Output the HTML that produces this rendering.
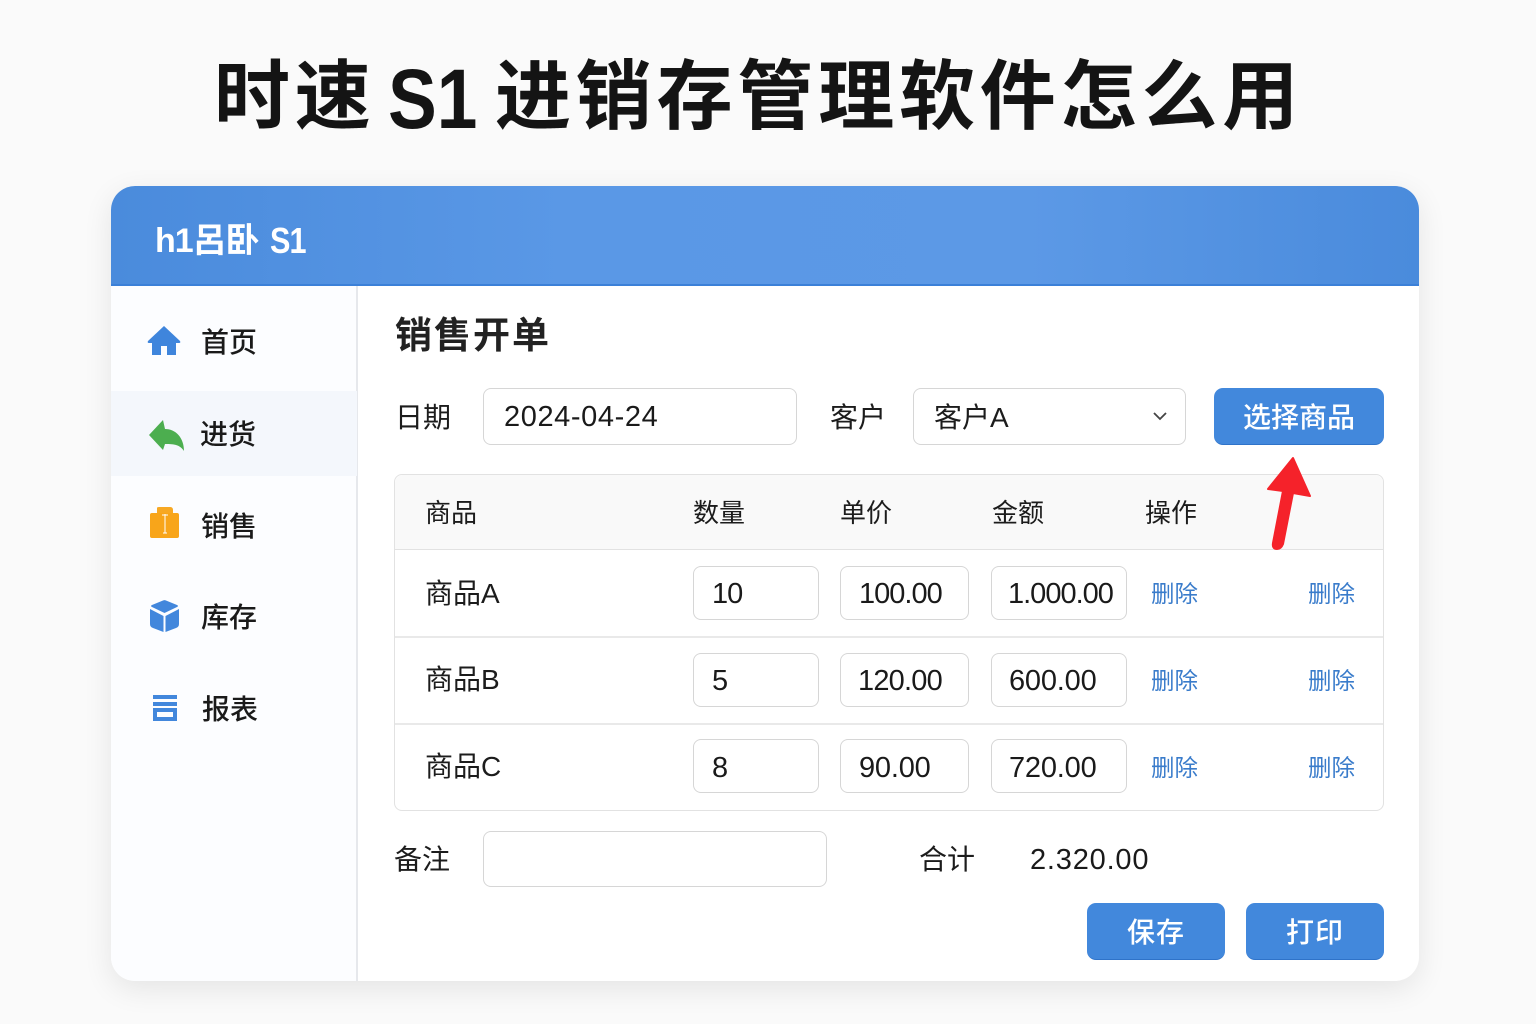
<!DOCTYPE html>
<html lang="zh-CN"><head><meta charset="utf-8"><title>时速 S1 进销存管理软件怎么用</title>
<style>
*{box-sizing:border-box;margin:0;padding:0}
html,body{width:1536px;height:1024px;overflow:hidden;background:#fafafa}
body{position:relative;font-family:"Liberation Sans","Noto Sans CJK SC",sans-serif;color:#1a1a1a}
.a{position:absolute;white-space:nowrap}
.t{position:absolute;white-space:nowrap;line-height:40px;height:40px;font-size:28px;color:#1c1c1c}
.s{font-weight:500;color:#1a1a1a}
.b{position:absolute;background:#fff;border:1.5px solid #d6d6d6;border-radius:8px}
.btn{position:absolute;background:#4288dc;border-radius:9px;border-bottom:1.5px solid #2f73c9;color:#fff;text-align:center;font-weight:500;font-size:28px}
.d{color:#3a7ccb;font-size:23.5px}
.n{font-size:29px;color:#1a1a1a}
.h{font-size:26px}
.ti{position:absolute;white-space:nowrap;top:48px;line-height:100px;font-size:76px;font-weight:700;color:#141414;letter-spacing:4.8px}
</style></head><body>
<div class="ti" style="left:214px">时速</div>
<div class="ti" style="left:388px;top:49px;font-size:84px;letter-spacing:0;transform:scaleX(.87);transform-origin:left center">S1</div>
<div class="ti" style="left:495px">进销存管理软件怎么用</div>

<div class="a" style="left:111px;top:186px;width:1308px;height:795px;background:#fff;border-radius:24px;box-shadow:0 8px 30px rgba(0,0,0,.09)"></div>
<div class="a" style="left:111px;top:186px;width:1308px;height:100px;background:linear-gradient(90deg,#4a8bdc 0%,#5a98e6 35%,#5c99e6 70%,#4a8bdc 100%);border-radius:24px 24px 0 0;border-bottom:2px solid #3b80d8"></div>
<div class="a" style="left:155px;top:216px;line-height:50px;font-size:34px;font-weight:700;color:#fff;letter-spacing:-1px">h1呂卧</div>
<div class="a" style="left:270px;top:216px;line-height:50px;font-size:36px;font-weight:700;color:#fff;letter-spacing:-1px;transform:scaleX(.85);transform-origin:left center">S1</div>

<div class="a" style="left:111px;top:286px;width:247px;height:695px;background:#fcfdff;border-right:2px solid #e6e8ec;border-radius:0 0 0 24px"></div>
<div class="a" style="left:111px;top:391px;width:246px;height:85px;background:#f4f7fc"></div>

<svg class="a" style="left:147px;top:325px" width="34" height="32" viewBox="0 0 34 32"><path d="M17 1 33 16q1 2-1 2h-3v12H20V21h-6v9H5V18H2q-2 0-1-2z" fill="#3f85dc"/></svg>
<svg class="a" style="left:149px;top:419px" width="36" height="34" viewBox="0 0 36 34"><path d="M0 16 14 1l2 9c11 0 19 9 19 22-4-6-9-7-19-7l-2 6z" fill="#4cae4f"/></svg>
<svg class="a" style="left:150px;top:506px" width="30" height="34" viewBox="0 0 30 34"><path d="M7 2q0-1 2-1h11q3 0 3 3v3H7z" fill="#f7a823"/><rect y="7" width="29" height="25" rx="2" fill="#f8a51a"/><path d="M15 8v19" stroke="#fff" stroke-width="1"/><path d="M12 9h6M13 27h4" stroke="#fff" stroke-width="1"/></svg>
<svg class="a" style="left:150px;top:599px" width="30" height="34" viewBox="0 0 30 34"><path d="M13 1.500q1.500-.7 3 0L27 6q2 1 0 2l-12.500 6L2 8q-2-1 0-2z" fill="#4287dc"/><path d="M0 10l13.500 7v16L3 29q-3-1-3-4zM29 10 15.500 17v16l10.500-4q3-1 3-4z" fill="#4287dc"/></svg>
<svg class="a" style="left:152px;top:694px" width="26" height="28" viewBox="0 0 26 28"><rect x="1" y="1" width="24" height="4" fill="#4287dc"/><rect x="1" y="8" width="24" height="4" fill="#4287dc"/><path d="M1 14h24v13H1zM5 18v5h16v-5z" fill="#4287dc" fill-rule="evenodd"/></svg>

<div class="t s" style="left:201px;top:323px">首页</div>
<div class="t s" style="left:200px;top:415px">进货</div>
<div class="t s" style="left:201px;top:507px">销售</div>
<div class="t s" style="left:201px;top:598px">库存</div>
<div class="t s" style="left:202px;top:690px">报表</div>

<div class="a" style="left:395px;top:311px;line-height:50px;font-size:37px;font-weight:700;color:#222;letter-spacing:2px">销售开单</div>

<div class="t" style="left:395px;top:398px">日期</div>
<div class="b" style="left:483px;top:388px;width:314px;height:57px"></div>
<div class="t n" style="left:504px;top:397px;letter-spacing:.6px">2024-04-24</div>
<div class="t" style="left:830px;top:398px">客户</div>
<div class="b" style="left:913px;top:388px;width:273px;height:57px"></div>
<div class="t" style="left:934px;top:398px">客户A</div>
<svg class="a" style="left:1152px;top:411px" width="16" height="10" viewBox="0 0 16 10"><path d="M2 2l6 6 6-6" fill="none" stroke="#444" stroke-width="1.800"/></svg>
<div class="btn" style="left:1214px;top:388px;width:170px;height:57px;line-height:59px">选择商品</div>

<div class="a" style="left:394px;top:474px;width:990px;height:337px;border:1.500px solid #e2e2e2;border-radius:8px;background:#fff"></div>
<div class="a" style="left:395px;top:475px;width:988px;height:75px;background:#f9f9f9;border-bottom:1.500px solid #e2e2e2;border-radius:8px 8px 0 0"></div>
<div class="a" style="left:395px;top:636px;width:988px;height:2px;background:#e9e9e9"></div>
<div class="a" style="left:395px;top:723px;width:988px;height:2px;background:#e9e9e9"></div>

<div class="t h" style="left:425px;top:493px">商品</div>
<div class="t h" style="left:693px;top:493px">数量</div>
<div class="t h" style="left:840px;top:493px">单价</div>
<div class="t h" style="left:992px;top:493px">金额</div>
<div class="t h" style="left:1145px;top:493px">操作</div>

<div class="t" style="left:425px;top:574px">商品A</div>
<div class="t" style="left:425px;top:660px">商品B</div>
<div class="t" style="left:425px;top:747px">商品C</div>

<div class="b" style="left:693px;top:566px;width:126px;height:54px"></div>
<div class="b" style="left:840px;top:566px;width:129px;height:54px"></div>
<div class="b" style="left:991px;top:566px;width:136px;height:54px"></div>
<div class="b" style="left:693px;top:653px;width:126px;height:54px"></div>
<div class="b" style="left:840px;top:653px;width:129px;height:54px"></div>
<div class="b" style="left:991px;top:653px;width:136px;height:54px"></div>
<div class="b" style="left:693px;top:739px;width:126px;height:54px"></div>
<div class="b" style="left:840px;top:739px;width:129px;height:54px"></div>
<div class="b" style="left:991px;top:739px;width:136px;height:54px"></div>

<div class="t n" style="left:712px;top:574px;letter-spacing:-1px">10</div>
<div class="t n" style="left:859px;top:574px;letter-spacing:-1px">100.00</div>
<div class="t n" style="left:1008px;top:574px;letter-spacing:-1px">1.000.00</div>
<div class="t n" style="left:712px;top:661px">5</div>
<div class="t n" style="left:858px;top:661px;letter-spacing:-.8px">120.00</div>
<div class="t n" style="left:1009px;top:661px;letter-spacing:-.2px">600.00</div>
<div class="t n" style="left:712px;top:748px">8</div>
<div class="t n" style="left:859px;top:748px;letter-spacing:-.2px">90.00</div>
<div class="t n" style="left:1009px;top:748px;letter-spacing:-.2px">720.00</div>

<div class="t d" style="left:1151px;top:574px">删除</div><div class="t d" style="left:1308px;top:574px">删除</div>
<div class="t d" style="left:1151px;top:661px">删除</div><div class="t d" style="left:1308px;top:661px">删除</div>
<div class="t d" style="left:1151px;top:748px">删除</div><div class="t d" style="left:1308px;top:748px">删除</div>

<svg class="a" style="left:1260px;top:452px" width="60" height="104" viewBox="0 0 60 104"><path d="M33 6 50 44 33 41 23 92q-2 5-6 5-5 0-4-6L23 39 8 37Z" fill="#f5222a" stroke="#f5222a" stroke-width="2" stroke-linejoin="round"/></svg>

<div class="t" style="left:394px;top:840px">备注</div>
<div class="b" style="left:483px;top:831px;width:344px;height:56px"></div>
<div class="t" style="left:919px;top:840px">合计</div>
<div class="t n" style="left:1030px;top:840px;letter-spacing:.8px">2.320.00</div>
<div class="btn" style="left:1087px;top:903px;width:138px;height:57px;line-height:60px;letter-spacing:1px">保存</div>
<div class="btn" style="left:1246px;top:903px;width:138px;height:57px;line-height:60px;letter-spacing:1px">打印</div>
</body></html>
